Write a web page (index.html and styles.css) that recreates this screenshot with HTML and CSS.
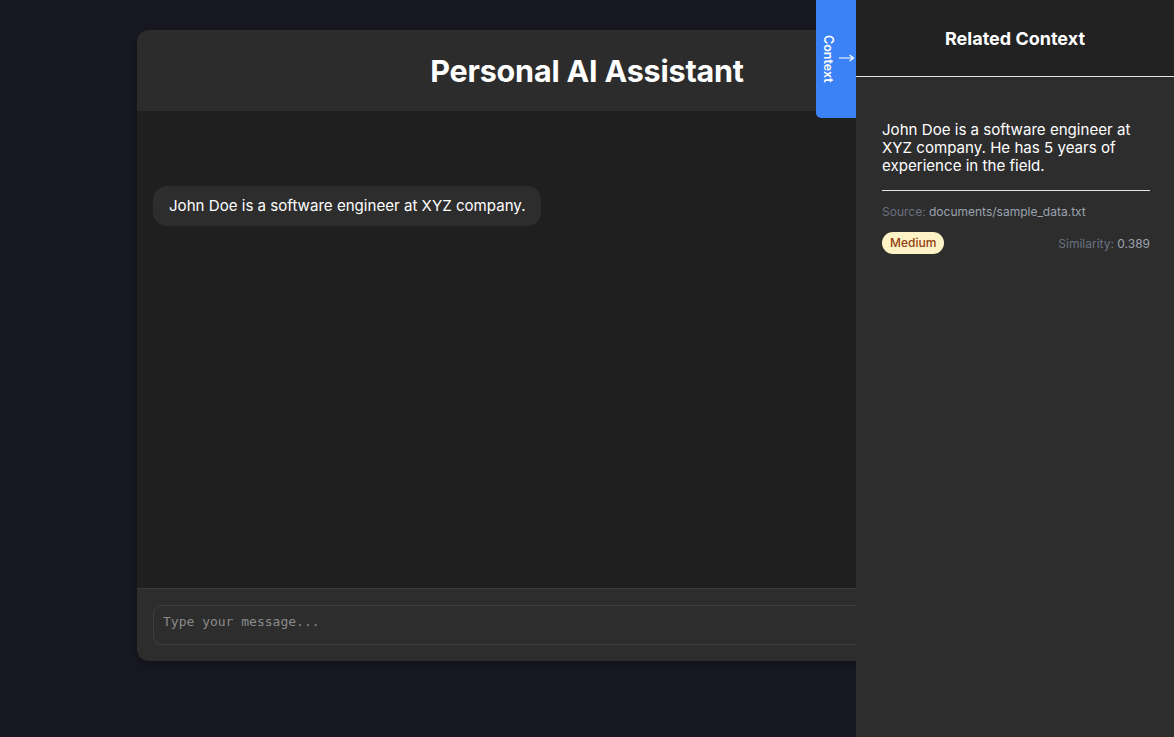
FILE: index.html
```html
<!DOCTYPE html>
<html>
<head>
<meta charset="utf-8">
<link rel="stylesheet" href="styles.css">
</head>
<body>
<div class="app">
  <div class="chat">
    <div class="chat-header"><h1 class="title">Personal AI Assistant</h1></div>
    <div class="messages">
      <div class="bubble">John Doe is a software engineer at XYZ company.</div>
    </div>
    <div class="input-area">
      <textarea class="input" placeholder="Type your message..."></textarea>
    </div>
  </div>
</div>
<aside class="sidebar">
  <button class="toggle"><span class="toggle-text">Context</span><svg class="toggle-arrow" width="16" height="8" viewBox="0 0 16 8"><path d="M0 4H14M10.5 1L14.5 4L10.5 7" fill="none" stroke="#fff" stroke-width="1.2"/></svg></button>
  <div class="side-header">Related Context</div>
  <div class="side-body">
    <div class="card">
      <p class="card-text">John Doe is a software engineer at XYZ company. He has 5 years of experience in the field.</p>
      <div class="source"><span class="label">Source:</span> documents/sample_data.txt</div>
      <div class="meta">
        <span class="badge">Medium</span>
        <span class="sim"><span class="label">Similarity:</span> 0.389</span>
      </div>
    </div>
  </div>
</aside>
</body>
</html>
```
FILE: styles.css
```css
* { box-sizing: border-box; }
html, body { margin: 0; height: 100%; }
body {
  background: #181822;
  font-family: Inter, "Noto Sans", sans-serif;
  color: #fff;
  overflow: hidden;
}
.app {
  padding-top: 30px;
  display: flex;
  justify-content: center;
}
.chat {
  width: 900px;
  height: 631px;
  border-radius: 12px;
  overflow: hidden;
  background: #1f1f1f;
  display: flex;
  flex-direction: column;
  box-shadow: 0 4px 12px rgba(0,0,0,0.3);
}
.chat-header {
  height: 81px;
  background: #2c2c2c;
  display: flex;
  align-items: center;
  justify-content: center;
}
.title {
  margin: 0;
  font-size: 30.5px;
  font-weight: 700;
  letter-spacing: -0.2px;
}
.messages {
  flex: 1;
  padding: 75px 16px 16px;
  display: flex;
  flex-direction: column;
  align-items: flex-start;
}
.bubble {
  background: #2d2d2d;
  border-radius: 14px;
  padding: 0 15px 0 16px;
  height: 40px;
  line-height: 40px;
  font-size: 15.1px;
}
.input-area {
  background: #2d2d2d;
  border-top: 1px solid #3a3a3a;
  padding: 16px;
}
.input {
  display: block;
  width: 100%;
  height: 40px;
  resize: none;
  background: #2d2d2d;
  border: 1px solid #404040;
  border-radius: 8px;
  padding: 8px 9px;
  font-family: "DejaVu Sans Mono", monospace;
  font-size: 13px;
  color: #fff;
  outline: none;
}
.input::placeholder { color: #8a8a8a; }
.sidebar {
  position: fixed;
  top: 0;
  right: 0;
  width: 318px;
  height: 100%;
  background: #2d2d2d;
  display: flex;
  flex-direction: column;
}
.toggle {
  position: absolute;
  left: -40px;
  top: 0;
  width: 40px;
  height: 118px;
  background: #3b82f6;
  border: none;
  border-radius: 0 0 0 5px;
  color: #fff;
  display: flex;
  align-items: center;
  justify-content: center;
  padding: 0;
  gap: 3px;
  font-family: Inter, sans-serif;
}
.toggle-text {
  writing-mode: vertical-rl;
  font-size: 12.5px;
  font-weight: 600;
  margin-left: 4px;
}
.toggle-arrow {
  margin-top: -2px;
  flex: none;
}
.side-header {
  height: 77px;
  background: #222222;
  border-bottom: 1px solid #e5e5e5;
  display: flex;
  align-items: center;
  justify-content: center;
  font-size: 18px;
  font-weight: 700;
}
.side-body { padding: 44px 24px 0 26px; }
.card-text {
  margin: 0;
  font-size: 15.1px;
  line-height: 18px;
  padding-bottom: 15px;
  border-bottom: 1px solid #e5e5e5;
}
.source {
  margin-top: 13px;
  font-size: 12px;
  color: #9ca3af;
}
.label { color: #6b7280; }
.meta {
  margin-top: 13px;
  display: flex;
  justify-content: space-between;
  align-items: center;
}
.badge {
  background: #fef3c7;
  color: #92400e;
  font-size: 12px;
  font-weight: 500;
  height: 22px;
  line-height: 22px;
  padding: 0 8px;
  border-radius: 11px;
}
.sim { font-size: 12px; color: #9ca3af; }
```
